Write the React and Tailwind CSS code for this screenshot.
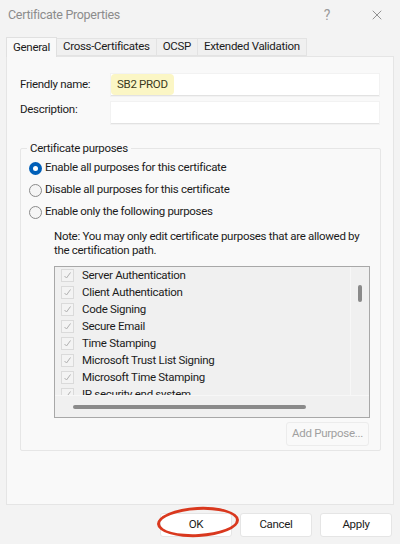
import { X } from "lucide-react";

const PURPOSES = [
  "Server Authentication",
  "Client Authentication",
  "Code Signing",
  "Secure Email",
  "Time Stamping",
  "Microsoft Trust List Signing",
  "Microsoft Time Stamping",
  "IP security end system",
];

const TABS = ["General", "Cross-Certificates", "OCSP", "Extended Validation"];

function Radio({ checked, label }) {
  return (
    <label className="flex items-center gap-[3px] h-[22px]">
      {checked ? (
        <span className="w-[13px] h-[13px] rounded-full bg-[#005fb8] flex items-center justify-center">
          <span className="w-[5px] h-[5px] rounded-full bg-white" />
        </span>
      ) : (
        <span className="w-[13px] h-[13px] rounded-full border border-[#8a8a8a] bg-[#f5f5f5]" />
      )}
      <span>{label}</span>
    </label>
  );
}

export default function App() {
  return (
    <div className="w-[400px] h-[544px] bg-[#f3f3f3] flex flex-col text-[11.5px] tracking-[-0.3px] text-[#1b1b1b] font-['Roboto',sans-serif] overflow-hidden">
      {/* title bar */}
      <div className="h-[30px] flex items-center pl-[8px] shrink-0">
        <span className="text-[12.5px] text-[#8c8c8c]">Certificate Properties</span>
        <span className="ml-auto text-[14px] text-[#9a9a9a] w-[20px] text-center mr-[32px]">?</span>
        <X size={16} strokeWidth={1.2} className="text-[#777] mr-[15px]" />
      </div>

      {/* tabs */}
      <div className="flex px-[6px] mt-[8px] h-[18px] shrink-0 items-end">
        {TABS.map((t, i) => (
          <div
            key={t}
            className={
              i === 0
                ? "h-[20px] px-[6px] bg-[#f9f9f9] border border-b-0 border-[#e0e0e0] flex items-center relative z-10 -mb-px"
                : "h-[18px] px-[6px] bg-[#f0f0f0] border border-l-0 border-[#e3e3e3] flex items-center"
            }
          >
            {t}
          </div>
        ))}
      </div>

      {/* panel */}
      <div className="mx-[6px] h-[449px] bg-[#f9f9f9] border border-[#e5e5e5] flex flex-col px-[13px] pt-[17px] shrink-0">
        <div className="flex items-center h-[22px]">
          <span className="w-[91px]">Friendly name:</span>
          <div className="w-[268px] h-[22px] bg-white border-b border-[#e2e2e2] shadow-[0_0_0_1px_#f2f2f2] flex items-center">
            <span className="bg-[#fbf6c5] h-full px-[6px] rounded-[4px] flex items-center text-[#3a3a20]">SB2 PROD</span>
          </div>
        </div>
        <div className="flex items-start h-[22px] mt-[6px]">
          <span className="w-[91px] -mt-[1px]">Description:</span>
          <div className="w-[268px] h-[22px] bg-white border-b border-[#e2e2e2] shadow-[0_0_0_1px_#f2f2f2]" />
        </div>

        {/* group box */}
        <div className="relative mt-[24px] w-[361px] h-[303px] border border-[#e6e6e6] rounded-[2px] pl-[8px] pt-[8px]">
          <span className="absolute -top-[9px] left-[6px] px-[3px] bg-[#f9f9f9]">Certificate purposes</span>
          <Radio checked label="Enable all purposes for this certificate" />
          <Radio label="Disable all purposes for this certificate" />
          <Radio label="Enable only the following purposes" />
          <p className="ml-[25px] mt-[6px] leading-[14px] w-[310px]">
            Note: You may only edit certificate purposes that are allowed by the certification path.
          </p>

          {/* list box */}
          <div className="ml-[25px] mt-[9px] w-[316px] h-[152px] border border-[#a8a8a8] bg-[#f0f0f0] flex flex-col">
            <div className="flex flex-1 min-h-0">
              <div className="flex-1 overflow-hidden pl-[6px] border-r border-[#f7f7f7]">
                {PURPOSES.map((p) => (
                  <div key={p} className="flex items-center h-[17px] gap-[8px] whitespace-nowrap">
                    <span className="w-[13px] h-[13px] border border-[#dadada] bg-[#f3f3f3] flex items-center justify-center shrink-0">
                      <svg width="9" height="9" viewBox="0 0 9 9">
                        <path d="M1.5 5 L3.5 7 L7.5 1.5" fill="none" stroke="#b0b0b0" strokeWidth="1" />
                      </svg>
                    </span>
                    <span>{p}</span>
                  </div>
                ))}
              </div>
              <div className="w-[18px] flex justify-center pt-[18px]">
                <span className="w-[4px] h-[17px] rounded-full bg-[#8a8a8a]" />
              </div>
            </div>
            <div className="h-[22px] border-t border-[#f7f7f7] flex items-center pl-[18px]">
              <span className="w-[233px] h-[4px] rounded-full bg-[#8a8a8a]" />
            </div>
          </div>

          <div className="flex justify-end pr-[11px] mt-[4px]">
            <button className="h-[24px] w-[83px] whitespace-nowrap border border-[#ececec] rounded-[3px] bg-[#f9f9f9] text-[#a0a0a0]">
              Add Purpose...
            </button>
          </div>
        </div>
      </div>

      {/* footer buttons */}
      <div className="flex justify-end gap-[8px] pr-[8px] mt-[8px]">
        <div className="relative">
          <button className="w-[72px] h-[24px] bg-white border border-[#e5e5e5] rounded-[3px]">OK</button>
          <span className="absolute left-[-3px] top-[-6px] w-[82px] h-[30px] rounded-[50%] border-[3px] border-[#d9381e] rotate-[-3deg] pointer-events-none" />
        </div>
        <button className="w-[72px] h-[24px] bg-white border border-[#e5e5e5] rounded-[3px]">Cancel</button>
        <button className="w-[72px] h-[24px] bg-white border border-[#e5e5e5] rounded-[3px]">Apply</button>
      </div>
    </div>
  );
}
